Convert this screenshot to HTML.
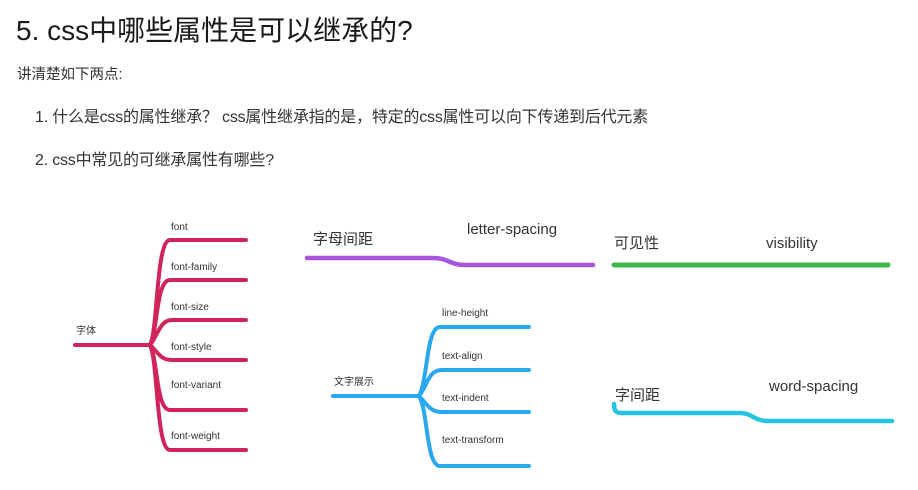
<!DOCTYPE html>
<html><head><meta charset="utf-8"><style>
body{margin:0;width:918px;height:490px;background:#fff;position:relative;overflow:hidden;font-family:"Liberation Sans","Noto Sans CJK SC",sans-serif;}
.t{position:absolute;white-space:nowrap;}
svg{position:absolute;left:0;top:0}
svg text{font-family:"Liberation Sans","Noto Sans CJK SC",sans-serif;fill:#333}
</style></head><body>
<div class="t" style="left:16px;top:9px;font-size:28px;color:#1a1a1a">5. css中哪些属性是可以继承的?</div>
<div class="t" style="left:17px;top:63px;font-size:14.5px;color:#333">讲清楚如下两点:</div>
<div class="t" style="left:35px;top:103px;font-size:16px;color:#333;letter-spacing:-0.2px">1. 什么是css的属性继承？ css属性继承指的是，特定的css属性可以向下传递到后代元素</div>
<div class="t" style="left:35px;top:146px;font-size:16px;color:#333;letter-spacing:-0.2px">2. css中常见的可继承属性有哪些?</div>
<svg width="918" height="490" viewBox="0 0 918 490">
<g fill="none" stroke="#d0245a" stroke-width="4" stroke-linecap="round">
<path d="M75 345 H150"/>
<path d="M150 345 C158 330 156 240 170 240 H246"/>
<path d="M150 345 C158 330 156 280 170 280 H246"/>
<path d="M150 345 C158 335 160 320 172 320 H246"/>
<path d="M150 345 C158 352 160 360 172 360 H246"/>
<path d="M150 345 C158 360 156 410 170 410 H246"/>
<path d="M150 345 C158 360 156 450 170 450 H246"/>
</g>
<g font-size="10">
<text x="171" y="230">font</text>
<text x="171" y="270">font-family</text>
<text x="171" y="310">font-size</text>
<text x="171" y="350">font-style</text>
<text x="171" y="388">font-variant</text>
<text x="171" y="439">font-weight</text>
<text x="76" y="334">字体</text>
</g>
<path d="M307 258 H433 C448 258 450 265 465 265 H593" fill="none" stroke="#a855e0" stroke-width="4.5" stroke-linecap="round"/>
<text x="313" y="244" font-size="15">字母间距</text>
<text x="467" y="234" font-size="15">letter-spacing</text>
<g fill="none" stroke="#2aa8ef" stroke-width="4" stroke-linecap="round">
<path d="M333 396 H419"/>
<path d="M419 396 C428 380 426 327 440 327 H529"/>
<path d="M419 396 C428 385 428 370 442 370 H529"/>
<path d="M419 396 C428 405 430 412 442 412 H529"/>
<path d="M419 396 C428 410 426 466 440 466 H529"/>
</g>
<g font-size="10">
<text x="442" y="316">line-height</text>
<text x="442" y="359">text-align</text>
<text x="442" y="401">text-indent</text>
<text x="442" y="443">text-transform</text>
<text x="334" y="385">文字展示</text>
</g>
<path d="M614 265 H888" fill="none" stroke="#3cb94a" stroke-width="5" stroke-linecap="round"/>
<text x="614" y="248" font-size="15">可见性</text>
<text x="766" y="248" font-size="15">visibility</text>
<path d="M614 404 C614 411 616 413 622 413 H740 C752 413 754 421 768 421 H892" fill="none" stroke="#26c4e0" stroke-width="4.5" stroke-linecap="round"/>
<text x="615" y="400" font-size="15">字间距</text>
<text x="769" y="391" font-size="15">word-spacing</text>
</svg>
</body></html>
